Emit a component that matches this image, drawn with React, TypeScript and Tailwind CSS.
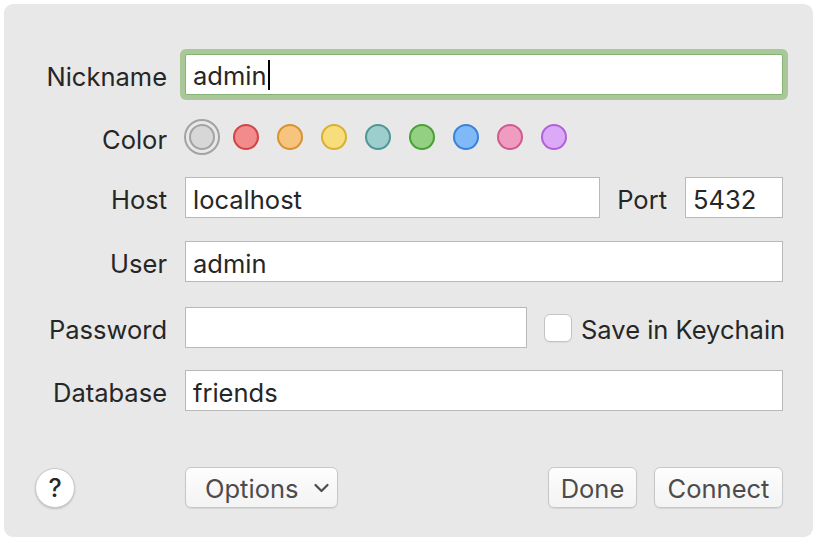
import React from "react";

const colors = [
  { fill: "#f28b8b", border: "#d04646" },
  { fill: "#f7c47e", border: "#d8922f" },
  { fill: "#f8dd7c", border: "#d9b033" },
  { fill: "#9ccece", border: "#4f9696" },
  { fill: "#93d082", border: "#47a136" },
  { fill: "#80b9f8", border: "#3a82d9" },
  { fill: "#f09cc0", border: "#cf5a8f" },
  { fill: "#dca9f8", border: "#b062d8" },
];

function Label({ children }: { children: React.ReactNode }) {
  return (
    <div className="w-[163px] shrink-0 text-right pt-[5px] text-[25.5px] leading-none text-[#262626] whitespace-nowrap">
      {children}
    </div>
  );
}

function Field({ value, className = "" }: { value?: string; className?: string }) {
  return (
    <div
      className={`h-[41px] bg-white border border-[#b9b9b9] flex items-center pl-[7px] pt-[5px] text-[25.5px] text-[#262626] whitespace-nowrap ${className}`}
    >
      {value}
    </div>
  );
}

function Button({ children, className = "" }: { children: React.ReactNode; className?: string }) {
  return (
    <div
      className={`h-[41px] shrink-0 rounded-[6px] border border-[#c6c6c6] bg-gradient-to-b from-[#fdfdfd] to-[#f3f3f3] shadow-[0_1px_1px_rgba(0,0,0,0.08)] flex items-center justify-center pt-[3px] text-[25.5px] text-[#4c4c4c] whitespace-nowrap ${className}`}
    >
      {children}
    </div>
  );
}

export default function App() {
  return (
    <div
      className="w-[820px] h-[544px] bg-white p-[4px]"
      style={{ fontFamily: "Inter, 'Noto Sans', sans-serif" }}
    >
      <div className="w-[809px] h-[533px] rounded-[9px] bg-[#e8e8e8] pt-[50px] pr-[30px] flex flex-col">
        {/* Nickname */}
        <div className="flex items-center gap-[18px]">
          <Label>Nickname</Label>
          <div className="flex-1 h-[41px] bg-white border border-[#86b276] rounded-[2px] shadow-[0_0_0_5px_#a8c898] flex items-center pl-[7px] pt-[4px] text-[25.5px] text-[#262626]">
            admin
            <span className="inline-block w-[2px] h-[30px] bg-black ml-[1px] -mt-[3px]" />
          </div>
        </div>

        {/* Color */}
        <div className="flex items-center gap-[18px] mt-[24px] h-[36px]">
          <Label>Color</Label>
          <div className="flex items-center -ml-[1px]">
            <div className="w-[36px] h-[36px] rounded-full border-2 border-[#a3a3a3] flex items-center justify-center">
              <div className="w-[26px] h-[26px] rounded-full bg-[#d7d7d7] border-2 border-[#a3a3a3]" />
            </div>
            <div className="flex items-center gap-[18px] ml-[13px]">
              {colors.map((c, i) => (
                <div
                  key={i}
                  className="w-[26px] h-[26px] rounded-full border-2"
                  style={{ background: c.fill, borderColor: c.border }}
                />
              ))}
            </div>
          </div>
        </div>

        {/* Host */}
        <div className="flex items-center gap-[18px] mt-[22px]">
          <Label>Host</Label>
          <Field value="localhost" className="flex-1" />
          <div className="text-[25.5px] pt-[5px] leading-none text-[#262626] -ml-[1px]">Port</div>
          <Field value="5432" className="w-[98px] shrink-0" />
        </div>

        {/* User */}
        <div className="flex items-center gap-[18px] mt-[23px]">
          <Label>User</Label>
          <Field value="admin" className="flex-1" />
        </div>

        {/* Password */}
        <div className="flex items-center gap-[18px] mt-[25px]">
          <Label>Password</Label>
          <Field className="w-[342px] shrink-0" />
          <div className="flex items-center gap-[9px] ml-[-1px] whitespace-nowrap">
            <div className="w-[28px] h-[28px] shrink-0 rounded-[6px] bg-white border border-[#c4c4c4] shadow-[0_1px_1px_rgba(0,0,0,0.06)]" />
            <div className="text-[25.5px] pt-[5px] leading-none text-[#262626] whitespace-nowrap">Save in Keychain</div>
          </div>
        </div>

        {/* Database */}
        <div className="flex items-center gap-[18px] mt-[22px]">
          <Label>Database</Label>
          <Field value="friends" className="flex-1" />
        </div>

        {/* Bottom buttons */}
        <div className="flex items-center mt-[56px]">
          <div className="w-[181px] shrink-0 flex items-center">
            <div className="ml-[31px] w-[40px] h-[40px] rounded-full bg-white border border-[#c8c8c8] shadow-[0_1px_2px_rgba(0,0,0,0.18)] flex items-center justify-center pt-[2px] text-[25px] font-medium text-[#262626]">
              ?
            </div>
          </div>
          <Button className="w-[153px] !justify-start gap-[16px] pl-[19px]">
            <span>Options</span>
            <svg width="15" height="10" viewBox="0 0 15 10" fill="none" className="-mt-[2px]">
              <path d="M1.5 2 L7.5 8 L13.5 2" stroke="#4c4c4c" strokeWidth="2.2" strokeLinecap="round" strokeLinejoin="round" />
            </svg>
          </Button>
          <div className="flex-1" />
          <Button className="w-[89px]">Done</Button>
          <Button className="w-[129px] ml-[17px]">Connect</Button>
        </div>
      </div>
    </div>
  );
}
